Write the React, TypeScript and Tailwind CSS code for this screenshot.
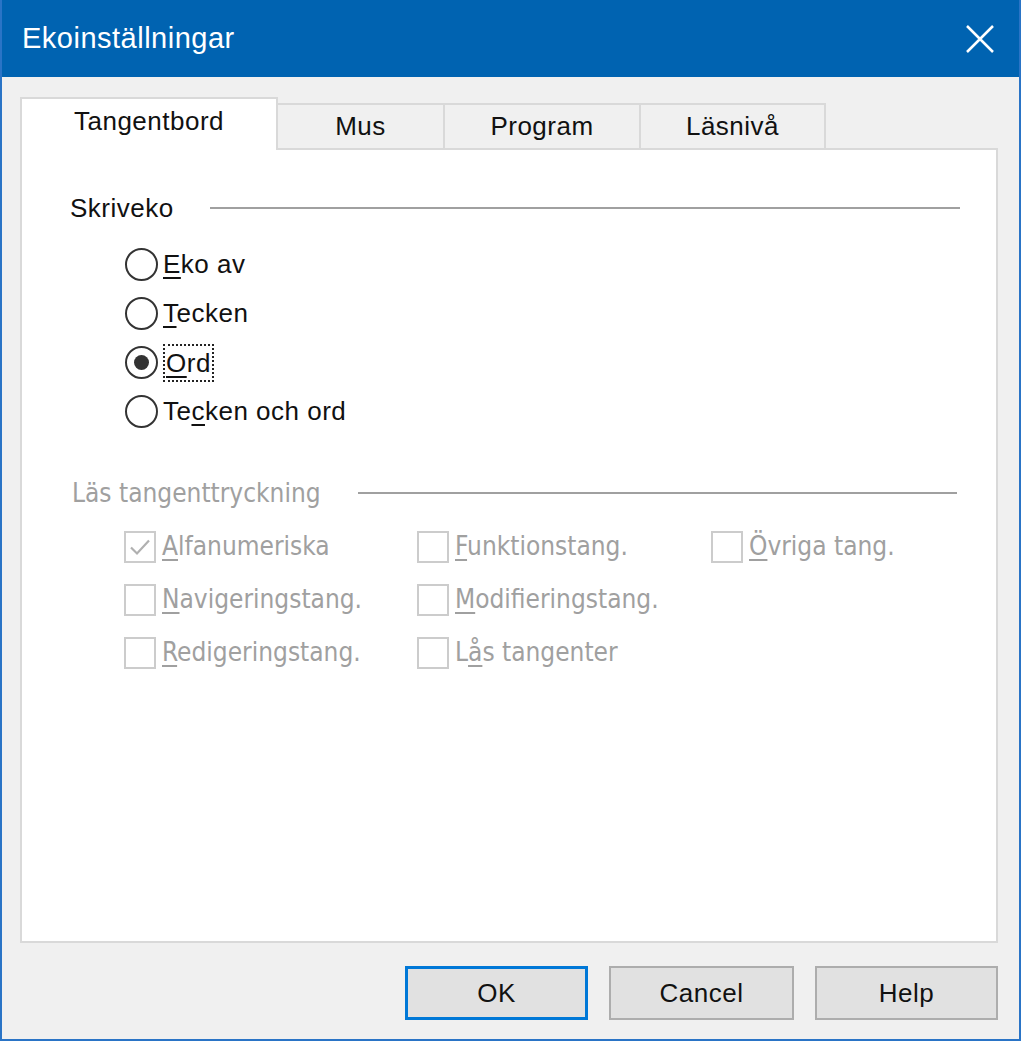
import React from 'react';

interface Item {
  pre: string;
  key: string;
  post: string;
  checked?: boolean;
}

const RADIOS: Item[] = [
  { pre: '', key: 'E', post: 'ko av' },
  { pre: '', key: 'T', post: 'ecken' },
  { pre: '', key: 'O', post: 'rd', checked: true },
  { pre: 'Te', key: 'c', post: 'ken och ord' },
];

const KEY_ROWS: (Item | null)[][] = [
  [
    { pre: '', key: 'A', post: 'lfanumeriska', checked: true },
    { pre: '', key: 'F', post: 'unktionstang.' },
    { pre: '', key: 'Ö', post: 'vriga tang.' },
  ],
  [
    { pre: '', key: 'N', post: 'avigeringstang.' },
    { pre: '', key: 'M', post: 'odifieringstang.' },
    null,
  ],
  [
    { pre: '', key: 'R', post: 'edigeringstang.' },
    { pre: 'L', key: 'å', post: 's tangenter' },
    null,
  ],
];

const TABS = [
  { label: 'Mus', w: 'w-[167px]' },
  { label: 'Program', w: 'w-[196px]' },
  { label: 'Läsnivå', w: 'w-[185px]' },
];

function Label({ item }: { item: Item }) {
  return (
    <>
      {item.pre}
      <span className="underline decoration-2 underline-offset-[4px]">{item.key}</span>
      {item.post}
    </>
  );
}

function Radio({ item }: { item: Item }) {
  return (
    <div className="h-[49px] flex items-center">
      <div className="w-[33px] h-[33px] rounded-full border-2 border-[#333333] bg-white flex items-center justify-center">
        {item.checked && <div className="w-[15px] h-[15px] rounded-full bg-[#333333]" />}
      </div>
      {item.checked ? (
        <span className="ml-[5px] px-[1px] border-2 border-dotted border-[#222222] leading-[34px]">
          <Label item={item} />
        </span>
      ) : (
        <span className="ml-[5px]">
          <Label item={item} />
        </span>
      )}
    </div>
  );
}

function Check({ item }: { item: Item }) {
  return (
    <div className="flex items-center">
      <div className="w-[32px] h-[32px] border-2 border-[#cccccc] bg-white flex items-center justify-center">
        {item.checked && (
          <svg width="24" height="24" viewBox="0 0 24 24" fill="none">
            <path d="M3 12.5 L9 18.5 L21 5.5" stroke="#b0b0b0" strokeWidth="2.2" />
          </svg>
        )}
      </div>
      <span className="ml-[6px]">
        <Label item={item} />
      </span>
    </div>
  );
}

export default function App() {
  return (
    <div className="w-[1024px] h-[1043px] bg-white font-['Liberation_Sans',Arial,sans-serif] text-[26px] tracking-[0.5px] text-[#111111]">
      <div className="w-[1021px] h-[1041px] border-x-2 border-b-2 border-[#2a74c6] bg-[#f0f0f0] flex flex-col">
        {/* Title bar */}
        <div className="h-[77px] bg-[#0063b1] flex items-center justify-between pl-[20px] pr-[24px] text-white">
          <span className="text-[29px]">Ekoinställningar</span>
          <svg width="30" height="30" viewBox="0 0 30 30" fill="none">
            <path d="M2 2 L28 28 M28 2 L2 28" stroke="white" strokeWidth="2.5" />
          </svg>
        </div>

        <div className="flex-1 flex flex-col pl-[18px] pr-[21px] pt-[20px]">
          {/* Tabs */}
          <div className="h-[51px] flex items-end">
            <div className="relative z-10 w-[258px] h-[53px] -mb-[2px] bg-white border-2 border-b-0 border-[#d9d9d9] flex items-center justify-center pb-[6px]">
              Tangentbord
            </div>
            {TABS.map((t) => (
              <div
                key={t.label}
                className={`${t.w} h-[45px] border-t-2 border-r-2 border-[#d9d9d9] flex items-center justify-center`}
              >
                {t.label}
              </div>
            ))}
          </div>

          {/* Panel */}
          <div className="h-[795px] bg-white border-2 border-[#d9d9d9] pt-[38px] pl-[48px] pr-[36px]">
            <div className="h-[40px] flex items-center">
              <span>Skriveko</span>
              <div className="flex-1 ml-[36px] h-[2px] bg-[#a0a0a0]" />
            </div>
            <div className="mt-[12px] ml-[55px] flex flex-col">
              {RADIOS.map((r) => (
                <Radio key={r.post} item={r} />
              ))}
            </div>

            <div className="mt-[37px] h-[40px] flex items-center text-[#a0a0a0] font-['DejaVu_Sans_Condensed','DejaVu_Sans',sans-serif] font-stretch-condensed tracking-normal">
              <span className="ml-[2px]">Läs tangenttryckning</span>
              <div className="flex-1 ml-[37px] mr-[3px] h-[2px] bg-[#a0a0a0]" />
            </div>
            <div className="mt-[7px] ml-[54px] text-[#a0a0a0] font-['DejaVu_Sans_Condensed','DejaVu_Sans',sans-serif] font-stretch-condensed tracking-normal">
              {KEY_ROWS.map((row, i) => (
                <div key={i} className="h-[53px] grid grid-cols-[293px_294px_1fr] items-center">
                  {row.map((c, j) => (c ? <Check key={j} item={c} /> : <div key={j} />))}
                </div>
              ))}
            </div>
          </div>

          {/* Buttons */}
          <div className="mt-[23px] flex justify-end gap-[21px] pr-[0px]">
            <button className="w-[183px] h-[54px] bg-[#e1e1e1] border-[3px] border-[#0078d7]">OK</button>
            <button className="w-[185px] h-[54px] bg-[#e1e1e1] border-2 border-[#adadad]">Cancel</button>
            <button className="w-[183px] h-[54px] bg-[#e1e1e1] border-2 border-[#adadad]">Help</button>
          </div>
        </div>
      </div>
    </div>
  );
}
